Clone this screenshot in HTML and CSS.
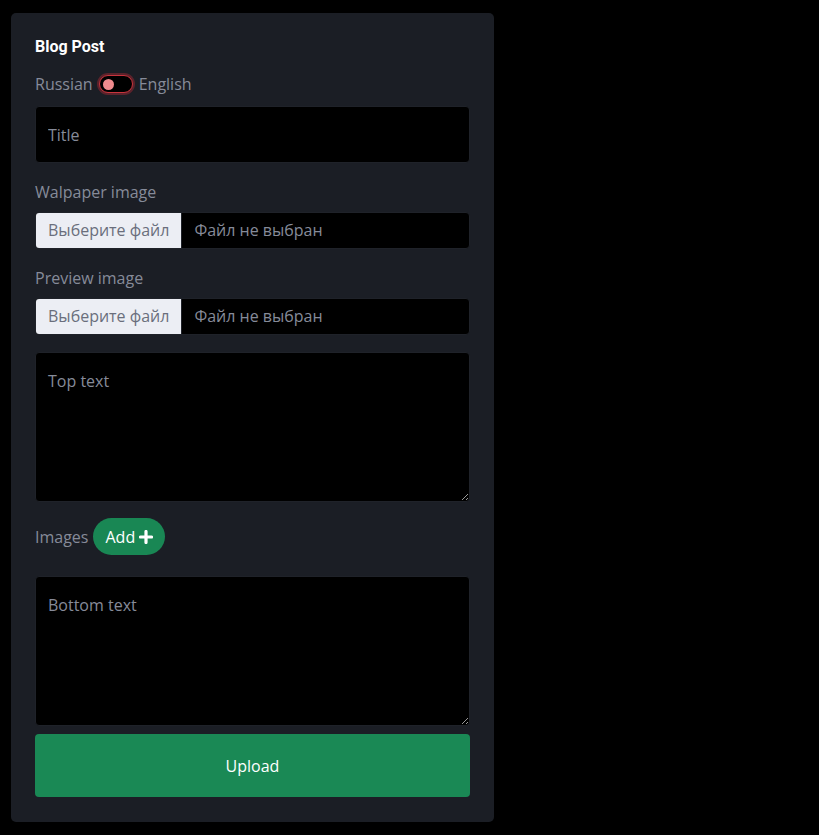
FILE: index.html
```html
<!DOCTYPE html>
<html>
<head>
<meta charset="utf-8">
<link rel="stylesheet" href="styles.css">
</head>
<body>
<div class="card">
  <h5 class="title">Blog Post</h5>
  <div class="lang-row">
    <span>Russian</span>
    <span class="toggle"><span class="knob"></span></span>
    <span>English</span>
  </div>
  <input class="field" type="text" placeholder="Title">
  <div class="label">Walpaper image</div>
  <div class="file"><span class="file-btn">Выберите файл</span><span class="file-name">Файл не выбран</span></div>
  <div class="label">Preview image</div>
  <div class="file"><span class="file-btn">Выберите файл</span><span class="file-name">Файл не выбран</span></div>
  <textarea class="area area-top" placeholder="Top text"></textarea>
  <div class="images-row">
    <span>Images</span>
    <button class="add">Add <svg width="14" height="14" viewBox="0 0 14 14"><path d="M7 1.5v11M1.5 7h11" stroke="#fff" stroke-width="3.2" stroke-linecap="round"/></svg></button>
  </div>
  <textarea class="area area-bottom" placeholder="Bottom text"></textarea>
  <button class="upload">Upload</button>
</div>
</body>
</html>
```
FILE: styles.css
```css
html, body { background: #000; }
body {
  margin: 0;
  padding: 13px 0 0 11px;
  font-family: "Open Sans", "Noto Sans", sans-serif;
  font-size: 16px;
  color: #868b99;
}
.card {
  box-sizing: border-box;
  width: 483px;
  background: #1b1e25;
  border-radius: 5px;
  padding: 24px 24px 25px;
  display: flex;
  flex-direction: column;
}
.title {
  margin: 0;
  font-family: Roboto, "Liberation Sans", sans-serif;
  font-weight: 700;
  font-size: 16px;
  line-height: 20px;
  color: #fff;
}
.lang-row {
  margin-top: 15px;
  height: 24px;
  display: flex;
  align-items: center;
  gap: 6px;
  line-height: 24px;
}
.toggle {
  box-sizing: border-box;
  width: 34px;
  height: 18px;
  border-radius: 9px;
  background: #000;
  border: 1px solid #c8343d;
  box-shadow: 0 0 0 2px rgba(170, 40, 50, 0.45);
  display: flex;
  align-items: center;
  padding-left: 3px;
}
.knob {
  width: 11px;
  height: 11px;
  border-radius: 50%;
  background: #f08b8e;
}
.field {
  box-sizing: border-box;
  margin-top: 10px;
  width: 100%;
  height: 57px;
  background: #000;
  border: 1px solid #1f2229;
  border-radius: 4px;
  padding: 0 12px;
  font-family: inherit;
  font-size: 16px;
  color: #ccc;
  outline: none;
}
.field::placeholder, .area::placeholder { color: #868b99; }
.label {
  margin-top: 17px;
  line-height: 24px;
}
.file {
  box-sizing: border-box;
  margin-top: 8px;
  height: 37px;
  display: flex;
  background: #000;
  border: 1px solid #1f2229;
  border-radius: 4px;
  overflow: hidden;
  line-height: 35px;
}
.file-btn {
  background: #eceef4;
  color: #6a6e7c;
  padding: 0 12px;
  border-right: 1px solid #1f2229;
}
.file-name {
  padding-left: 12px;
  color: #868b99;
}
.area {
  box-sizing: border-box;
  margin-top: 17px;
  width: 100%;
  height: 150px;
  background: #000;
  border: 1px solid #1f2229;
  border-radius: 4px;
  padding: 16px 12px;
  font-family: inherit;
  font-size: 16px;
  line-height: 24px;
  color: #ccc;
  outline: none;
  display: block;
}
.area-bottom { margin-top: 20px; }
.images-row {
  margin-top: 16px;
  height: 37px;
  display: flex;
  align-items: center;
  gap: 5px;
}
.add {
  height: 37px;
  border: none;
  border-radius: 19px;
  background: #198754;
  color: #fff;
  font-family: inherit;
  font-size: 16px;
  padding: 0 12px;
  display: flex;
  align-items: center;
  gap: 4px;
}
.area-bottom { margin-top: 21px; }
.upload {
  margin-top: 8px;
  height: 63px;
  width: 100%;
  border: none;
  border-radius: 4px;
  background: #1a8955;
  color: #fff;
  font-family: inherit;
  font-size: 16px;
}
```
